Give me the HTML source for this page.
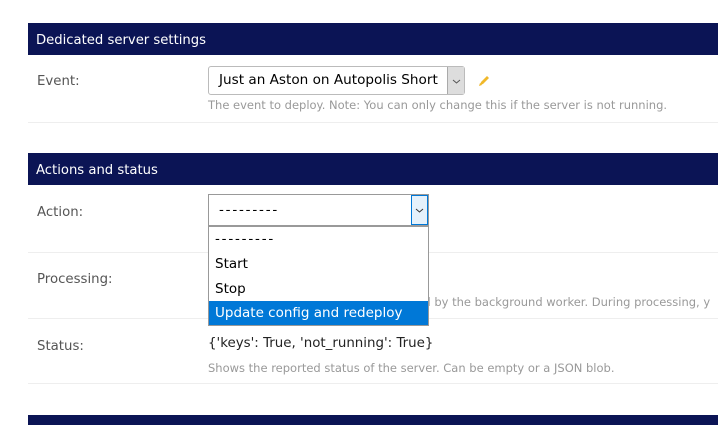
<!DOCTYPE html>
<html><head><meta charset="utf-8"><style>
*{margin:0;padding:0;box-sizing:border-box}
body{width:718px;height:423px;background:#fff;font-family:"DejaVu Sans","Liberation Sans",sans-serif;position:relative;overflow:hidden;color:#333}
.a{position:absolute;white-space:nowrap}
.bar{position:absolute;left:28px;right:0;background:#0b1455;color:#fff;font-size:13.2px;padding-left:8px}
.lbl{font-size:13.3px;color:#555}
.help{font-size:11.5px;color:#999}
.sep{position:absolute;left:28px;right:0;height:1px;background:#eee}
</style></head><body>
<div class="bar" style="top:23px;height:32px;line-height:35px">Dedicated server settings</div>
<div class="a lbl" style="left:37px;top:74px">Event:</div>
<div class="a" style="left:208px;top:66px;width:257px;height:29px;border:1px solid #bbb;border-radius:3px;font-size:13.6px;color:#000;padding-left:10px;line-height:27px">Just an Aston on Autopolis Short
<div style="position:absolute;right:0;top:0;width:17px;height:27px;background:#ddd;border-left:1px solid #aaa"><svg width="17" height="27"><path d="M5 13l3.5 3 3.5-3" stroke="#555" fill="none" stroke-width="1"/></svg></div></div>
<svg class="a" style="left:477px;top:74px" width="14" height="14"><path d="M3 11l1-3 6-6 2 2-6 6z" fill="#f0b82a"/><path d="M2 12l1-3 2 2z" fill="#f0b82a"/></svg>
<div class="a help" style="left:208px;top:98px">The event to deploy. Note: You can only change this if the server is not running.</div>
<div class="sep" style="top:122px"></div>

<div class="bar" style="top:153px;height:32px;line-height:35px">Actions and status</div>
<div class="a lbl" style="left:37px;top:205px">Action:</div>
<div class="a" style="left:208px;top:194px;width:221px;height:32px;border:1px solid #999;font-size:13.5px;color:#000;padding-left:10px;line-height:30px;letter-spacing:1.8px">---------
<div style="position:absolute;right:0;top:0;width:17px;height:30px;background:#e5f1fb;border:1px solid #0078d7"><svg width="15" height="28"><path d="M4 13l3.5 3 3.5-3" stroke="#333" fill="none" stroke-width="1"/></svg></div></div>
<div class="sep" style="top:252px"></div>
<div class="a lbl" style="left:37px;top:272px">Processing:</div>
<div class="a help" style="left:208px;top:295px">The state the server is in as processed by the background worker. During processing, y</div>
<div class="sep" style="top:318px"></div>
<div class="a" style="left:208px;top:226px;width:221px;height:100px;border:1px solid #999;background:#fff;font-size:13.5px;color:#000">
<div style="height:24px;line-height:24px;padding-left:6px;letter-spacing:1.8px">---------</div>
<div style="height:25px;line-height:26px;padding-left:6px">Start</div>
<div style="height:25px;line-height:26px;padding-left:6px">Stop</div>
<div style="height:24px;line-height:24px;padding-left:6px;background:#0078d7;color:#fff">Update config and redeploy</div>
</div>
<div class="a lbl" style="left:37px;top:339px">Status:</div>
<div class="a" style="left:208px;top:336px;font-size:13.4px;color:#222">{'keys': True, 'not_running': True}</div>
<div class="a help" style="left:208px;top:361px">Shows the reported status of the server. Can be empty or a JSON blob.</div>
<div class="sep" style="top:383px"></div>
<div class="bar" style="top:415px;height:10px"></div>
</body></html>
